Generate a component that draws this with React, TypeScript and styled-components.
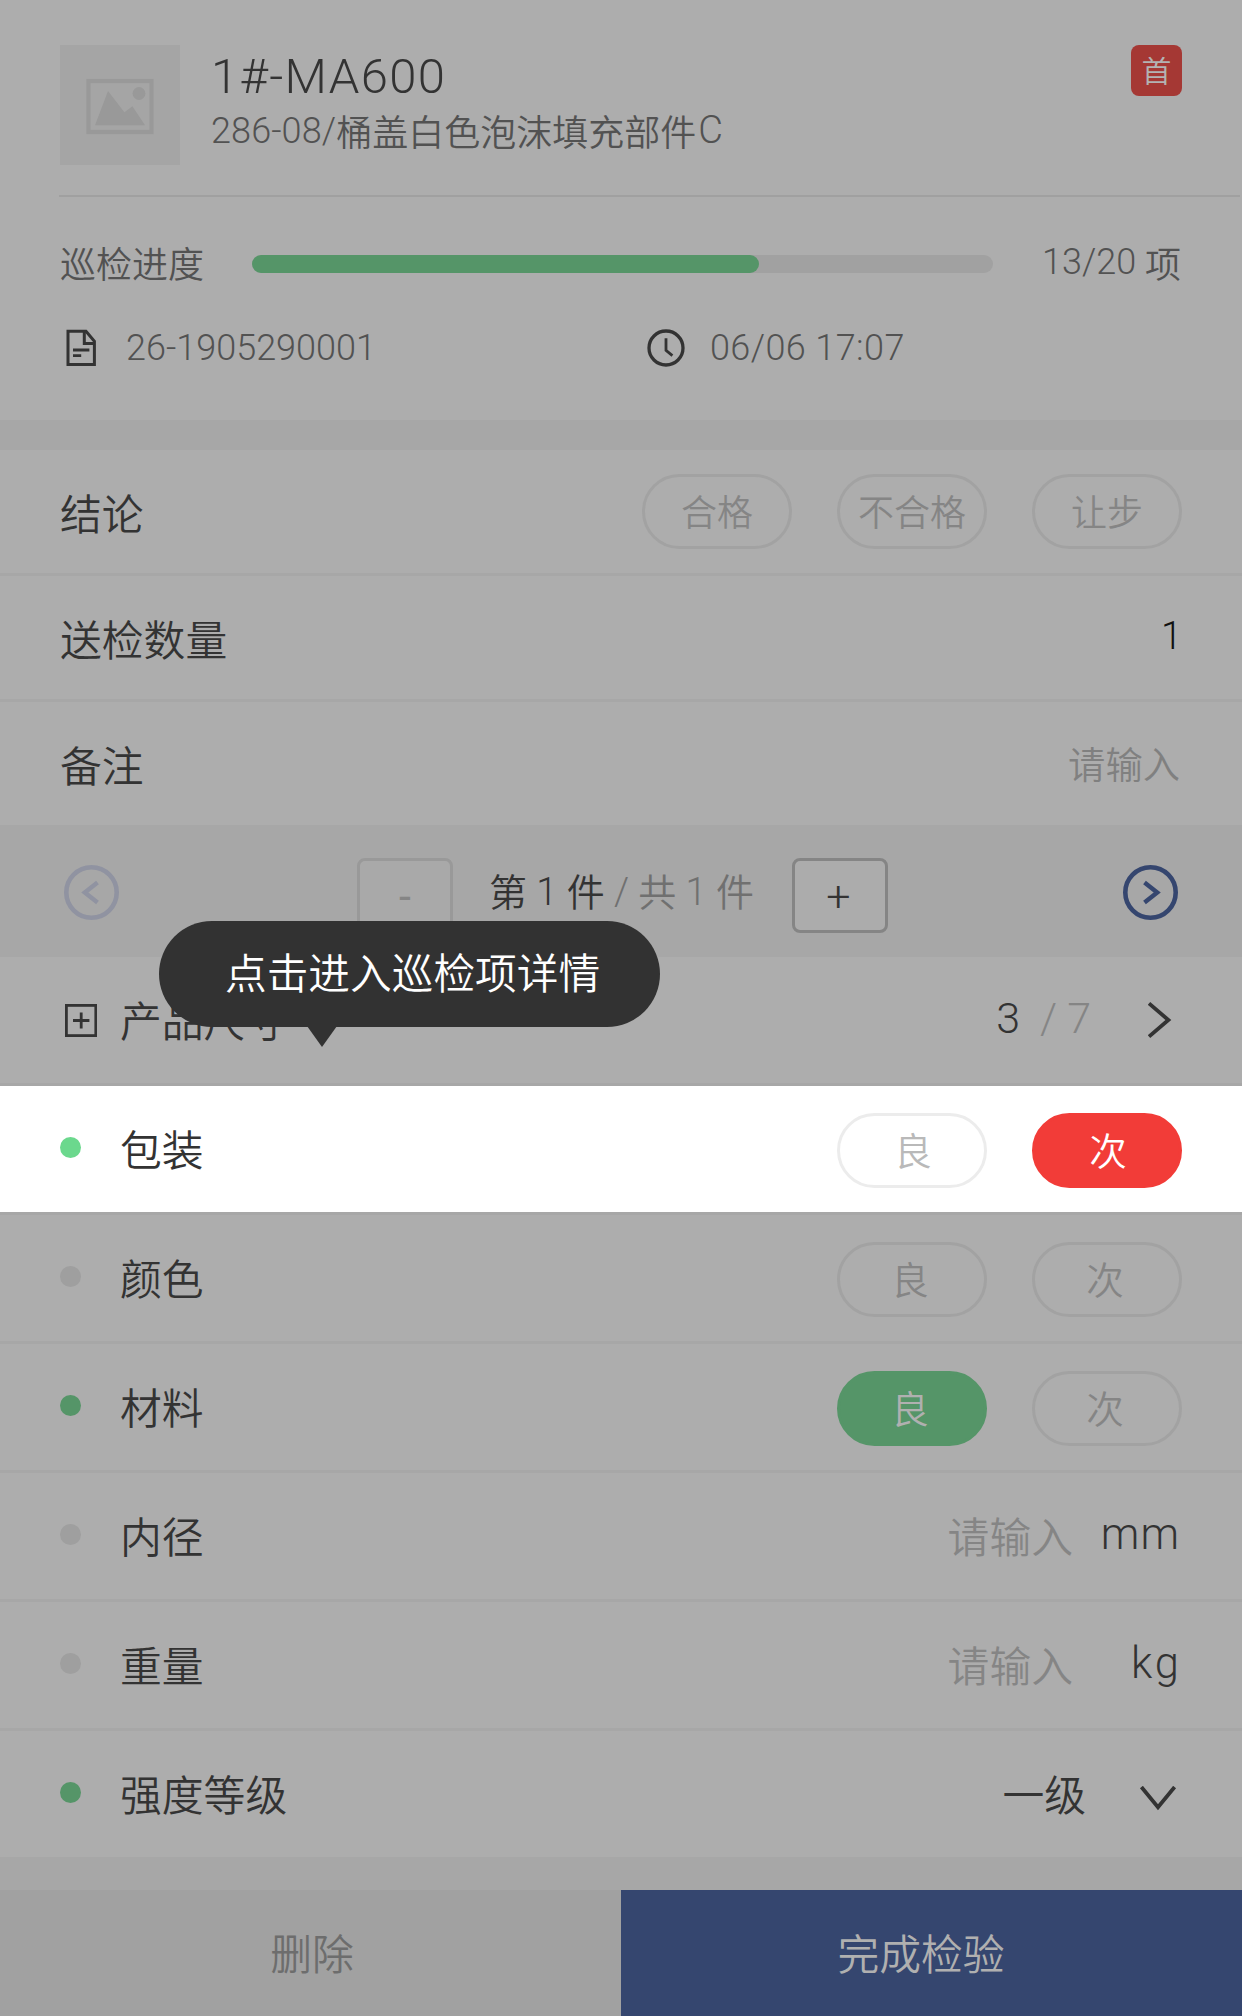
import React from 'react';
import styled, { createGlobalStyle } from 'styled-components';

const color = {
  surface: '#adadad',
  gap: '#a7a7a7',
  line: '#a7a7a7',
  track: '#a1a1a1',
  ink: '#333333',
  mid: '#525252',
  faint: '#858585',
  green: '#559568',
  blue: '#35466f',
  red: '#a53834',
};

const GlobalStyle = createGlobalStyle`
  * { box-sizing: border-box; }
  body {
    margin: 0;
    background: ${color.surface};
    font-family: 'Noto Sans CJK SC', sans-serif;
    font-weight: 350;
    color: ${color.ink};
  }
  button { font: inherit; padding: 0; margin: 0; cursor: pointer; }
`;

const Page = styled.main`
  width: 1242px;
  height: 2016px;
  display: flex;
  flex-direction: column;
  background: ${color.surface};
  overflow: hidden;
`;

const Num = styled.span<{ $spacing?: number; $lift?: number; $tone?: string }>`
  font-family: Roboto, 'Noto Sans CJK SC', sans-serif;
  font-weight: 300;
  letter-spacing: ${(p) => p.$spacing ?? 0}px;
  vertical-align: ${(p) => p.$lift ?? 0}px;
  color: ${(p) => p.$tone ?? 'inherit'};
  line-height: 1;
  white-space: pre;
`;

/* ---------- header ---------- */

const Header = styled.header`
  height: 197px;
  margin-left: 59px;
  margin-right: 2px;
  padding: 45px 58px 0 1px;
  display: flex;
  align-items: flex-start;
  border-bottom: 2px solid #a0a0a0;
`;

const Thumb = styled.div`
  width: 120px;
  height: 120px;
  flex: none;
  background: #a5a5a5;
  display: flex;
`;

const Heading = styled.div`
  flex: 1;
  margin-left: 31px;
  display: flex;
  flex-direction: column;
`;

const Title = styled.h1`
  margin: 0;
  height: 59px;
  font-weight: 400;
  font-size: 49px;
  line-height: 53px;
`;

const Subtitle = styled.div`
  height: 52px;
  font-size: 36px;
  line-height: 52px;
  color: ${color.mid};
  white-space: nowrap;
`;

const Suffix = styled(Num)`
  margin-left: 2px;
  font-size: 38px;
`;

const Badge = styled.div`
  width: 51px;
  height: 51px;
  border-radius: 8px;
  background: ${color.red};
  color: #b3b3b3;
  font-size: 30px;
  line-height: 48px;
  text-align: center;
`;

/* ---------- progress summary ---------- */

const Summary = styled.section`
  height: 223px;
  padding: 42px 60px 0;
  font-size: 36px;
  color: ${color.mid};
`;

const ProgressLine = styled.div`
  height: 46px;
  display: flex;
  align-items: center;
  line-height: 46px;
`;

const Track = styled.div`
  width: 741px;
  height: 18px;
  margin: 4px 0 0 48px;
  border-radius: 9px;
  background: ${color.track};
`;

const Fill = styled.div`
  height: 18px;
  border-radius: 9px;
  background: ${color.green};
`;

const Count = styled.div`
  margin-left: auto;
  padding-right: 1px;
  white-space: pre;
`;

const MetaLine = styled.div`
  margin-top: 41px;
  height: 44px;
  display: grid;
  grid-template-columns: 584px 1fr;
`;

const Meta = styled.div<{ $gap: number }>`
  display: flex;
  align-items: center;
  gap: ${(p) => p.$gap}px;
  line-height: 44px;
`;

const Gap = styled.div<{ $h: number }>`
  height: ${(p) => p.$h}px;
  flex: none;
  background: ${color.gap};
`;

/* ---------- rows ---------- */

const FormRow = styled.div<{ $last?: boolean }>`
  height: ${(p) => (p.$last ? 123 : 126)}px;
  flex: none;
  padding: 0 60px;
  display: flex;
  align-items: center;
  border-bottom: ${(p) => (p.$last ? 0 : 3)}px solid ${color.line};
`;

const ItemRow = styled.div<{ $active?: boolean; $last?: boolean }>`
  position: relative;
  height: ${(p) => (p.$last ? 126 : 129)}px;
  flex: none;
  padding: 0 60px;
  display: flex;
  align-items: center;
  background: ${(p) => (p.$active ? '#ffffff' : color.surface)};
  border-bottom: ${(p) => (p.$last ? 0 : 3)}px solid ${color.line};
`;

const Label = styled.div`
  font-size: 41.8px;
  line-height: 60px;
  height: 60px;
  white-space: nowrap;
`;

const ItemLabel = styled(Label)`
  height: 62px;
`;

const Dot = styled.span<{ $tone: string }>`
  width: 21px;
  height: 21px;
  margin: 0 39px 3px 0;
  border-radius: 50%;
  background: ${(p) => p.$tone};
`;

const Pills = styled.div<{ $drop?: number }>`
  margin-left: auto;
  margin-top: ${(p) => p.$drop ?? 0}px;
  display: flex;
  gap: 45px;
`;

const Pill = styled.button<{
  $fill?: string;
  $line?: string;
  $ink?: string;
  $size?: number;
  $before?: number;
  $after?: number;
}>`
  width: 150px;
  height: 75px;
  border-radius: 38px;
  border: 3px solid ${(p) => p.$fill ?? p.$line ?? '#a2a2a2'};
  background: ${(p) => p.$fill ?? 'transparent'};
  color: ${(p) => p.$ink ?? color.faint};
  font-size: ${(p) => p.$size ?? 36}px;
  line-height: 66px;
  padding: 0 ${(p) => p.$after ?? 0}px 3px ${(p) => p.$before ?? 0}px;
  white-space: nowrap;
`;

const Value = styled.div<{ $ink?: string; $size?: number; $lift?: number; $inset?: number }>`
  margin-left: auto;
  height: ${(p) => 62 + (p.$lift ?? 0)}px;
  padding-right: ${(p) => p.$inset ?? 0}px;
  font-size: ${(p) => p.$size ?? 41.8}px;
  line-height: 60px;
  color: ${(p) => p.$ink ?? color.ink};
  white-space: nowrap;
`;

const Unit = styled.div<{ $spacing: number }>`
  width: 109px;
  height: 63px;
  text-align: right;
  font-family: Roboto, sans-serif;
  font-weight: 300;
  font-size: 43.5px;
  line-height: 60px;
  letter-spacing: ${(p) => p.$spacing}px;
  padding-right: ${(p) => 3 - p.$spacing}px;
`;

/* ---------- pager ---------- */

const Pager = styled.div`
  height: 132px;
  flex: none;
  padding: 3px 64px 0;
  display: flex;
  align-items: center;
  justify-content: space-between;
  background: ${color.gap};
`;

const Stepper = styled.div`
  width: 531px;
  margin-top: 6px;
  margin-left: 3px;
  display: flex;
  align-items: center;
  justify-content: space-between;
`;

const StepButton = styled.button<{ $enabled?: boolean }>`
  width: 96px;
  height: 75px;
  border-radius: 8px;
  border: 3px solid ${(p) => (p.$enabled ? color.faint : '#999999')};
  background: ${(p) => (p.$enabled ? '#acacac' : '#a9a9a9')};
  color: ${(p) => (p.$enabled ? color.ink : color.faint)};
  display: flex;
  align-items: center;
  justify-content: center;
  font-family: Roboto, sans-serif;
  font-weight: ${(p) => (p.$enabled ? 300 : 400)};
  font-size: 43px;
  line-height: 60px;
  padding: 0 ${(p) => (p.$enabled ? 3 : 0)}px 0 0;
`;

const PagerText = styled.div`
  height: 62px;
  margin-right: 2px;
  font-size: 38px;
  line-height: 50px;
  white-space: pre;
`;

const Dim = styled.span`
  color: #707070;
`;

const CircleButton = styled.button`
  width: 55px;
  height: 55px;
  border: 0;
  background: none;
  display: flex;
`;

const ExpandIcon = styled.svg`
  margin: 0 23px 0 5px;
  flex: none;
`;

const Tally = styled.div`
  margin-left: auto;
  display: flex;
  align-items: center;
  height: 64px;
  padding-bottom: 4px;
  font-size: 43px;
  line-height: 60px;
`;

const Slash = styled(Num)`
  margin: 0 10px 0 20px;
`;

const ArrowSlot = styled.span<{ $left: number; $right: number; $top?: number }>`
  display: flex;
  margin: ${(p) => p.$top ?? 0}px ${(p) => p.$right}px 0 ${(p) => p.$left}px;
`;

/* ---------- tooltip ---------- */

const Tooltip = styled.div`
  position: absolute;
  left: 159px;
  bottom: 185px;
  width: 501px;
  height: 106px;
  padding-left: 66px;
  border-radius: 53px;
  background: #323232;
  color: #ffffff;
  font-size: 41.7px;
  line-height: 101px;
  white-space: nowrap;
  z-index: 2;

  &::after {
    content: '';
    position: absolute;
    left: 148px;
    top: 105px;
    border: solid transparent;
    border-width: 21px 15px 0;
    border-top-color: #323232;
  }
`;

/* ---------- footer ---------- */

const Footer = styled.footer`
  height: 126px;
  flex: none;
  display: grid;
  grid-template-columns: 1fr 1fr;
`;

const FooterButton = styled.button<{ $primary?: boolean }>`
  border: 0;
  background: ${(p) => (p.$primary ? color.blue : '#a1a1a1')};
  color: ${(p) => (p.$primary ? '#b0b0b0' : '#6d6d6d')};
  font-size: 41.8px;
  line-height: 120px;
  padding: ${(p) => (p.$primary ? '0 21px 3px 0' : '0 0 3px 3px')};
`;

/* ---------- icons ---------- */

const PictureIcon = () => (
  <svg width="120" height="120" viewBox="0 0 120 120">
    <rect x="28.5" y="36" width="63" height="51" fill="none" stroke="#999" strokeWidth="4.2" />
    <path d="M35 80.3 48 46l16.4 21.3 8-6L85 80.3z" fill="#999" />
    <circle cx="79" cy="48.5" r="6.4" fill="#999" />
  </svg>
);

const DocIcon = () => (
  <svg width="42" height="44" viewBox="0 0 42 44" fill="none" stroke={color.ink} strokeWidth="3">
    <path d="M8 5.2h18l8.4 10v23.4H8z" />
    <path d="M24.3 5v12.6h10" />
    <path d="M13 24h16.4M13 29.6h8.2" strokeWidth="2.8" />
  </svg>
);

const ClockIcon = () => (
  <svg width="44" height="44" viewBox="0 0 44 44" fill="none" stroke={color.ink}>
    <circle cx="22" cy="22" r="17" strokeWidth="3.3" />
    <path d="M22 12.2v12.2l6.4 5.2" strokeWidth="2.8" />
  </svg>
);

const CircleArrow = ({ dir, tone }: { dir: 'left' | 'right'; tone: string }) => (
  <svg width="55" height="55" viewBox="0 0 55 55" fill="none" stroke={tone}>
    <circle cx="27.5" cy="27.5" r="25.2" strokeWidth="4.6" />
    <path
      d={dir === 'left' ? 'M33.5 17.6 20.8 27.5l12.7 9.9' : 'M21.5 17.6l12.7 9.9-12.7 9.9'}
      strokeWidth="4.4"
    />
  </svg>
);

const PlusBox = () => (
  <ExpandIcon width="32" height="33" viewBox="0 0 32 33" fill="none" stroke={color.ink} strokeWidth="2.8">
    <rect x="1.4" y="1.4" width="29.4" height="30.2" />
    <path d="M8 16.5h16.4M16.2 8.5v16" />
  </ExpandIcon>
);

const ChevronRight = () => (
  <svg width="24" height="38" viewBox="0 0 24 38" fill="none" stroke={color.ink} strokeWidth="3.8">
    <path d="M1 2.4 20.4 19 1 35.6" />
  </svg>
);

const ChevronDown = () => (
  <svg width="38" height="25" viewBox="0 0 38 25" fill="none" stroke={color.ink} strokeWidth="3.8">
    <path d="M2.4 1 19 21.2 35.6 1" />
  </svg>
);

/* ---------- screen ---------- */

const off = '#9f9f9f';

export default function App() {
  const progress = (507 / 741) * 100;
  return (
    <>
      <GlobalStyle />
      <Page>
        <Header>
          <Thumb>
            <PictureIcon />
          </Thumb>
          <Heading>
            <Title>
              <Num $spacing={1.3}>1#-MA600</Num>
            </Title>
            <Subtitle>
              <Num $lift={3} $spacing={0.1}>286-08/</Num>桶盖白色泡沫填充部件<Suffix $lift={3}>C</Suffix>
            </Subtitle>
          </Heading>
          <Badge>首</Badge>
        </Header>

        <Summary>
          <ProgressLine>
            巡检进度
            <Track>
              <Fill style={{ width: `${progress}%` }} />
            </Track>
            <Count>
              <Num $lift={4}>13/20 </Num>项
            </Count>
          </ProgressLine>
          <MetaLine>
            <Meta $gap={24}>
              <DocIcon />
              <Num>26-1905290001</Num>
            </Meta>
            <Meta $gap={22}>
              <ClockIcon />
              <Num $spacing={0.4}>06/06 17:07</Num>
            </Meta>
          </MetaLine>
        </Summary>

        <Gap $h={30} />

        <FormRow>
          <Label>结论</Label>
          <Pills>
            <Pill>合格</Pill>
            <Pill>不合格</Pill>
            <Pill>让步</Pill>
          </Pills>
        </FormRow>
        <FormRow>
          <Label>送检数量</Label>
          <Value $size={38} $ink="#111111" $lift={8}>
            <Num>1</Num>
          </Value>
        </FormRow>
        <FormRow $last>
          <Label>备注</Label>
          <Value $size={37.3} $ink="#808080" $inset={2}>
            请输入
          </Value>
        </FormRow>

        <Pager>
          <CircleButton>
            <CircleArrow dir="left" tone="#9093a1" />
          </CircleButton>
          <Stepper>
            <StepButton>-</StepButton>
            <PagerText>
              第<Num $lift={1}> 1 </Num>件<Dim><Num $lift={1}> / </Num>共<Num $lift={1}> 1 </Num>件</Dim>
            </PagerText>
            <StepButton $enabled>+</StepButton>
          </Stepper>
          <CircleButton>
            <CircleArrow dir="right" tone={color.blue} />
          </CircleButton>
        </Pager>

        <ItemRow>
          <PlusBox />
          <ItemLabel>产品尺寸</ItemLabel>
          <Tally>
            <Num>3</Num>
            <Slash $tone={color.faint}>/</Slash>
            <Num $tone={color.faint}>7</Num>
            <ArrowSlot $left={57} $right={10} $top={4}>
              <ChevronRight />
            </ArrowSlot>
          </Tally>
        </ItemRow>

        <ItemRow $active>
          <Tooltip>点击进入巡检项详情</Tooltip>
          <Dot $tone="#6bd88d" />
          <ItemLabel>包装</ItemLabel>
          <Pills $drop={3}>
            <Pill $line="#ececec" $ink="#b9b9b9" $size={37.6} $before={2}>
              良
            </Pill>
            <Pill $fill="#f23c38" $ink="#ffffff" $size={37.6} $before={2}>
              次
            </Pill>
          </Pills>
        </ItemRow>

        <ItemRow>
          <Dot $tone={off} />
          <ItemLabel>颜色</ItemLabel>
          <Pills $drop={3}>
            <Pill $size={37.6} $after={4}>良</Pill>
            <Pill $size={37.6} $after={4}>次</Pill>
          </Pills>
        </ItemRow>

        <ItemRow>
          <Dot $tone={color.green} />
          <ItemLabel>材料</ItemLabel>
          <Pills $drop={3}>
            <Pill $size={37.6} $after={4} $fill={color.green} $ink="#b0b0b0">
              良
            </Pill>
            <Pill $size={37.6} $after={4}>次</Pill>
          </Pills>
        </ItemRow>

        <ItemRow>
          <Dot $tone={off} />
          <ItemLabel>内径</ItemLabel>
          <Value $ink={color.faint}>请输入</Value>
          <Unit $spacing={1}>mm</Unit>
        </ItemRow>

        <ItemRow>
          <Dot $tone={off} />
          <ItemLabel>重量</ItemLabel>
          <Value $ink={color.faint}>请输入</Value>
          <Unit $spacing={3}>kg</Unit>
        </ItemRow>

        <ItemRow $last>
          <Dot $tone={color.green} />
          <ItemLabel>强度等级</ItemLabel>
          <Value>一级</Value>
          <ArrowSlot $left={53} $right={5} $top={8}>
            <ChevronDown />
          </ArrowSlot>
        </ItemRow>

        <Gap $h={33} />

        <Footer>
          <FooterButton>删除</FooterButton>
          <FooterButton $primary>完成检验</FooterButton>
        </Footer>
      </Page>
    </>
  );
}
